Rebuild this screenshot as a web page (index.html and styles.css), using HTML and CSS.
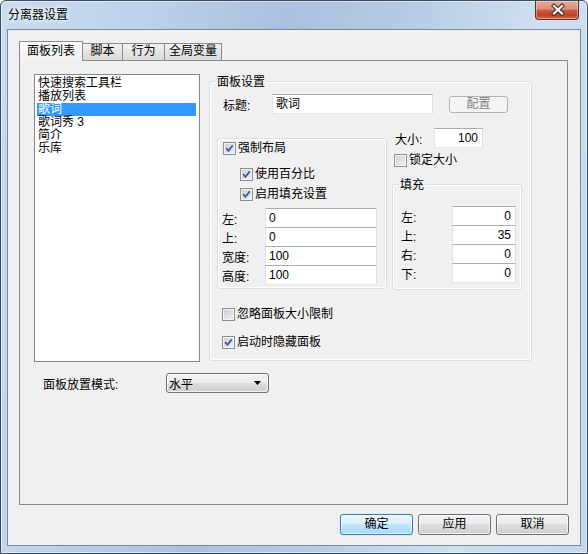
FILE: index.html
```html
<!DOCTYPE html>
<html lang="zh-CN">
<head>
    <meta charset="UTF-8">
    <title>分离器设置</title>
    <link rel="stylesheet" href="styles.css">
</head>
<body>
<div class="window">
    <div class="titlebar">
        <span class="title">分离器设置</span>
        <div class="close-btn">
            <svg width="44" height="18" viewBox="0 0 44 18">
                <path d="M18 5 L26 12.5 M26 5 L18 12.5" stroke="#3b2a28" stroke-width="4.2" stroke-linecap="square"/>
                <path d="M18 5 L26 12.5 M26 5 L18 12.5" stroke="#ffffff" stroke-width="2.2" stroke-linecap="square"/>
            </svg>
        </div>
    </div>

    <div class="client">
        <div class="tab-strip">
            <div class="tab tab-active">面板列表</div>
            <div class="tab tab-2">脚本</div>
            <div class="tab tab-3">行为</div>
            <div class="tab tab-4">全局变量</div>
        </div>

        <div class="tab-page">
            <div class="page-top">
                <ul class="listbox">
                    <li>快速搜索工具栏</li>
                    <li>播放列表</li>
                    <li class="selected">歌词</li>
                    <li>歌词秀 3</li>
                    <li>简介</li>
                    <li>乐库</li>
                </ul>

                <div class="group panel-group">
                    <span class="legend">面板设置</span>
                    <div class="title-row">
                        <span class="lbl-title">标题:</span>
                        <div class="edit edit-title">歌词</div>
                        <div class="btn btn-disabled btn-config">配置</div>
                    </div>

                    <div class="layout-row">
                        <div class="group force-group">
                            <div class="check">
                                <span class="cb"><svg width="11" height="11" viewBox="0 0 11 11"><path d="M2.2 5.2 L4.4 7.8 L8.8 2.4" fill="none" stroke="#4258a0" stroke-width="1.8"/></svg></span>
                                强制布局
                            </div>
                            <div class="check sub sub-1">
                                <span class="cb"><svg width="11" height="11" viewBox="0 0 11 11"><path d="M2.2 5.2 L4.4 7.8 L8.8 2.4" fill="none" stroke="#4258a0" stroke-width="1.8"/></svg></span>
                                使用百分比
                            </div>
                            <div class="check sub sub-2">
                                <span class="cb"><svg width="11" height="11" viewBox="0 0 11 11"><path d="M2.2 5.2 L4.4 7.8 L8.8 2.4" fill="none" stroke="#4258a0" stroke-width="1.8"/></svg></span>
                                启用填充设置
                            </div>
                            <div class="fields layout-fields">
                                <div class="field"><span class="field-lbl">左:</span><div class="edit">0</div></div>
                                <div class="field"><span class="field-lbl">上:</span><div class="edit">0</div></div>
                                <div class="field"><span class="field-lbl">宽度:</span><div class="edit">100</div></div>
                                <div class="field"><span class="field-lbl">高度:</span><div class="edit">100</div></div>
                            </div>
                        </div>

                        <div class="size-col">
                            <div class="size-row">
                                <span class="size-lbl">大小:</span>
                                <div class="edit num size-edit">100</div>
                            </div>
                            <div class="check lock-check"><span class="cb"></span>锁定大小</div>
                            <div class="group pad-group">
                                <span class="legend">填充</span>
                                <div class="fields pad-fields">
                                    <div class="field"><span class="field-lbl">左:</span><div class="edit num">0</div></div>
                                    <div class="field"><span class="field-lbl">上:</span><div class="edit num">35</div></div>
                                    <div class="field"><span class="field-lbl">右:</span><div class="edit num">0</div></div>
                                    <div class="field"><span class="field-lbl">下:</span><div class="edit num">0</div></div>
                                </div>
                            </div>
                        </div>
                    </div>

                    <div class="check bottom-check first"><span class="cb"></span>忽略面板大小限制</div>
                    <div class="check bottom-check">
                        <span class="cb"><svg width="11" height="11" viewBox="0 0 11 11"><path d="M2.2 5.2 L4.4 7.8 L8.8 2.4" fill="none" stroke="#4258a0" stroke-width="1.8"/></svg></span>
                        启动时隐藏面板
                    </div>
                </div>
            </div>

            <div class="mode-row">
                <span class="mode-lbl">面板放置模式:</span>
                <div class="combo">
                    <span>水平</span>
                    <svg width="7" height="4" viewBox="0 0 7 4"><path d="M0 0 H7 L3.5 4 Z" fill="#000"/></svg>
                </div>
            </div>
        </div>

        <div class="button-row">
            <div class="btn btn-default">确定</div>
            <div class="btn">应用</div>
            <div class="btn">取消</div>
        </div>
    </div>
</div>
</body>
</html>
```

FILE: styles.css
```css
* {
    box-sizing: border-box;
}

body {
    margin: 0;
    font-family: "Liberation Sans", "Noto Sans CJK SC", sans-serif;
    font-size: 12px;
    color: #000;
}

/* janela com moldura estilo vidro */
.window {
    width: 588px;
    height: 554px;
    border: 1px solid #3a4b5e;
    border-radius: 6px 6px 0 0;
    background: linear-gradient(100deg, #cadcf0 0%, #bcd1ea 22%, #a9c1de 42%, #b4cae4 58%, #cfe0f1 80%, #c3d7ed 100%);
    box-shadow: inset 0 0 0 1px rgba(255, 255, 255, 0.5);
    display: flex;
    flex-direction: column;
}

.titlebar {
    height: 28px;
    display: flex;
    align-items: flex-start;
}

.title {
    margin: 7px 0 0 7px;
    line-height: 14px;
    text-shadow: 0 0 6px #fff, 0 0 3px #fff;
}

.close-btn {
    margin-left: auto;
    margin-right: 8px;
    width: 44px;
    height: 19px;
    border: 1px solid #5e2f2a;
    border-top: none;
    border-radius: 0 0 4px 4px;
    background: linear-gradient(#e9ab9c 0%, #dd8c7a 45%, #c85a43 52%, #c3411f 80%, #d7704f 100%);
    box-shadow: inset 0 0 0 1px rgba(255, 255, 255, 0.35);
}

.close-btn svg {
    display: block;
}

.client {
    margin: 0 6px;
    height: 517px;
    border: 1px solid #7c8a9b;
    background: #f0f0f0;
}

/* abas */
.tab-strip {
    display: flex;
    align-items: flex-end;
    height: 19px;
    margin: 11px 0 0 11px;
}

.tab {
    height: 17px;
    border: 1px solid #898c95;
    border-bottom: none;
    background: linear-gradient(#f3f3f3, #e4e4e4 50%, #dadada);
    text-align: center;
    line-height: 15px;
    margin-left: -1px;
}

.tab-active {
    position: relative;
    z-index: 1;
    height: 20px;
    width: 64px;
    margin-left: 0;
    margin-bottom: -1px;
    background: linear-gradient(#fdfdfd, #f4f4f4 60%, #f0f0f0);
    line-height: 19px;
}

.tab-2 {
    width: 41px;
}

.tab-3 {
    width: 43px;
}

.tab-4 {
    width: 58px;
}

.tab-page {
    margin-left: 11px;
    width: 549px;
    height: 445px;
    border: 1px solid #898c95;
    background: #f0f0f0;
}

.page-top {
    display: flex;
    align-items: flex-start;
}

.listbox {
    list-style: none;
    margin: 13px 0 0 14px;
    padding: 2px 3px 0 2px;
    width: 166px;
    height: 288px;
    border: 1px solid #828790;
    background: #fff;
}

.listbox li {
    height: 13px;
    line-height: 13px;
    padding-left: 1px;
    white-space: nowrap;
}

.listbox li.selected {
    background: #3399ff;
    color: #fff;
}

/* caixas de grupo */
.group {
    position: relative;
    border: 1px solid #d5dfe5;
    border-radius: 3px;
    box-shadow: inset 0 0 0 1px #fff;
}

.legend {
    position: absolute;
    top: -7px;
    left: 6px;
    padding: 0 1px;
    background: #f0f0f0;
    line-height: 14px;
}

.panel-group {
    margin: 20px 0 0 9px;
    width: 323px;
    height: 280px;
}

.title-row {
    display: flex;
    align-items: center;
    margin-top: 12px;
    padding-left: 13px;
}

.lbl-title {
    width: 49px;
}

.edit {
    height: 20px;
    line-height: 18px;
    padding: 0 3px;
    background: #fff;
    border: 1px solid;
    border-color: #abadb3 #dbdfe6 #e3e9ef #e2e3ea;
    white-space: nowrap;
}

.edit.num {
    text-align: right;
    padding-right: 4px;
}

.edit-title {
    width: 161px;
}

.btn {
    width: 73px;
    height: 21px;
    line-height: 19px;
    text-align: center;
    border: 1px solid #707070;
    border-radius: 3px;
    background: linear-gradient(#f2f2f2 0%, #ebebeb 50%, #dddddd 50%, #cfcfcf 100%);
    box-shadow: inset 0 0 0 1px rgba(255, 255, 255, 0.7);
}

.btn-default {
    border-color: #3c7fb1;
    background: linear-gradient(#eaf6fd 0%, #d9f0fc 50%, #bee6fd 50%, #a7d9f5 100%);
    box-shadow: inset 0 0 0 1px rgba(255, 255, 255, 0.6), 0 0 1px #58c6f2;
}

.btn-disabled {
    border-color: #adb2b5;
    background: #f4f4f4;
    color: #838383;
    box-shadow: none;
}

.btn-config {
    margin-left: 16px;
    width: 59px;
    height: 17px;
    line-height: 15px;
}

.layout-row {
    display: flex;
    align-items: flex-start;
    margin-top: 14px;
    padding-left: 7px;
}

.force-group {
    margin-top: 10px;
    width: 170px;
    height: 151px;
    padding: 3px 0 0 5px;
}

/* caixas de seleção */
.check {
    display: flex;
    align-items: center;
    height: 13px;
    line-height: 13px;
    white-space: nowrap;
}

.cb {
    flex: none;
    width: 13px;
    height: 13px;
    margin-right: 2px;
    border: 1px solid #8e8f8f;
    background: linear-gradient(135deg, #c9ccd2, #f2f2f2);
    box-shadow: inset 0 0 0 1px #f4f4f4;
}

.cb svg {
    display: block;
}

.sub {
    margin-left: 17px;
}

.sub-1 {
    margin-top: 13px;
}

.sub-2 {
    margin-top: 7px;
}

.field {
    display: flex;
    align-items: center;
    height: 20px;
}

.field + .field {
    margin-top: -1px;
}

.layout-fields {
    margin: 7px 0 0 -1px;
}

.layout-fields .field-lbl {
    width: 43px;
}

.layout-fields .edit {
    width: 112px;
}

.size-col {
    margin-left: 5px;
    width: 131px;
}

.size-row {
    display: flex;
    align-items: center;
    padding-left: 3px;
}

.size-lbl {
    width: 39px;
}

.size-edit {
    width: 49px;
}

.lock-check {
    margin: 6px 0 0 2px;
}

.pad-group {
    margin-top: 17px;
    width: 130px;
    height: 106px;
}

.pad-fields {
    margin-top: 21px;
    padding-left: 8px;
}

.pad-fields .field-lbl {
    width: 51px;
}

.pad-fields .edit {
    width: 64px;
}

.bottom-check {
    margin: 15px 0 0 12px;
}

.bottom-check.first {
    margin-top: 18px;
}

.mode-row {
    display: flex;
    align-items: center;
    margin-top: 11px;
    padding-left: 23px;
}

.mode-lbl {
    width: 123px;
}

.combo {
    display: flex;
    align-items: center;
    justify-content: space-between;
    width: 103px;
    height: 20px;
    padding: 0 7px 0 2px;
    border: 1px solid #707070;
    border-radius: 3px;
    background: linear-gradient(#f2f2f2 0%, #ebebeb 50%, #dddddd 50%, #cfcfcf 100%);
    box-shadow: inset 0 0 0 1px rgba(255, 255, 255, 0.7);
}

.button-row {
    display: flex;
    justify-content: flex-end;
    gap: 5px;
    margin-top: 9px;
    padding-right: 11px;
}
```
